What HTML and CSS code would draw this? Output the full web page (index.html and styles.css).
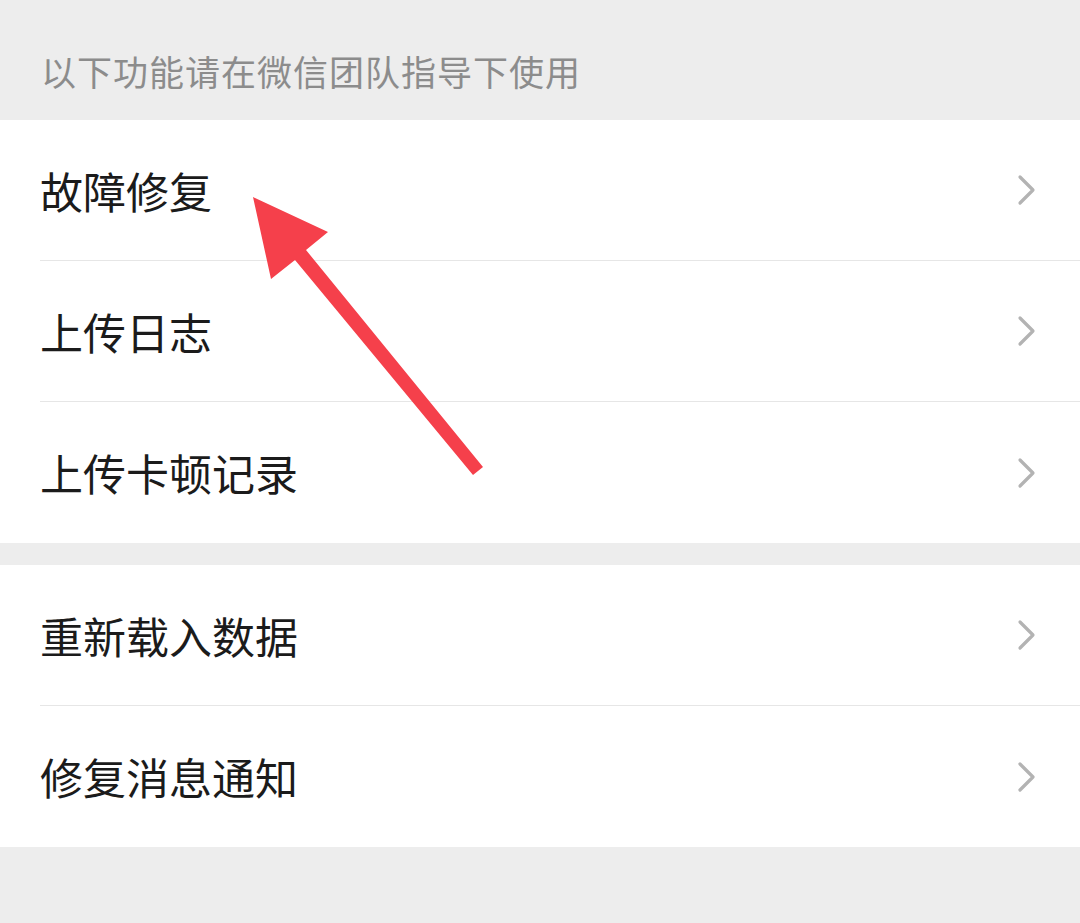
FILE: index.html
```html
<!DOCTYPE html>
<html lang="zh">
<head>
<meta charset="utf-8">
<link rel="stylesheet" href="styles.css">
</head>
<body>
<div class="page">
  <div class="tip">以下功能请在微信团队指导下使用</div>
  <div class="group">
    <div class="row"><span class="label">故障修复</span><svg class="chev" viewBox="0 0 20 32"><polyline points="3,3 16,16 3,29"/></svg></div>
    <div class="row"><span class="label">上传日志</span><svg class="chev" viewBox="0 0 20 32"><polyline points="3,3 16,16 3,29"/></svg></div>
    <div class="row last"><span class="label">上传卡顿记录</span><svg class="chev" viewBox="0 0 20 32"><polyline points="3,3 16,16 3,29"/></svg></div>
  </div>
  <div class="gap"></div>
  <div class="group">
    <div class="row"><span class="label">重新载入数据</span><svg class="chev" viewBox="0 0 20 32"><polyline points="3,3 16,16 3,29"/></svg></div>
    <div class="row last"><span class="label">修复消息通知</span><svg class="chev" viewBox="0 0 20 32"><polyline points="3,3 16,16 3,29"/></svg></div>
  </div>
  <svg class="arrow" viewBox="0 0 1080 923" width="1080" height="923">
    <polygon points="253,197 328,232 306,250 483,467 473,475 295,260 271,279"/>
  </svg>
</div>
</body>
</html>
```

FILE: styles.css
```css
html, body {
  margin: 0;
  padding: 0;
  background: #ededed;
}
body {
  font-family: "Noto Sans CJK SC", "Noto Sans", sans-serif;
}
.page {
  position: relative;
  width: 1080px;
  height: 923px;
  overflow: hidden;
}
.tip {
  box-sizing: border-box;
  height: 120px;
  padding: 20px 0 0 41px;
  display: flex;
  align-items: center;
  font-size: 35px;
  letter-spacing: 1px;
  color: #8c8c8c;
}
.group {
  background: #ffffff;
}
.row {
  box-sizing: border-box;
  height: 141px;
  margin-left: 40px;
  padding-right: 43px;
  border-bottom: 1px solid #e6e6e6;
  display: flex;
  align-items: center;
  justify-content: space-between;
}
.row.last {
  border-bottom: none;
}
.label {
  font-size: 43px;
  color: #1b1b1b;
  padding-bottom: 1px;
}
.chev {
  width: 20px;
  height: 32px;
  fill: none;
  stroke: #b3b3b3;
  stroke-width: 3.2;
  stroke-linecap: round;
  stroke-linejoin: round;
}
.gap {
  height: 22px;
}
.arrow {
  position: absolute;
  left: 0;
  top: 0;
  fill: #f5404b;
}
```
